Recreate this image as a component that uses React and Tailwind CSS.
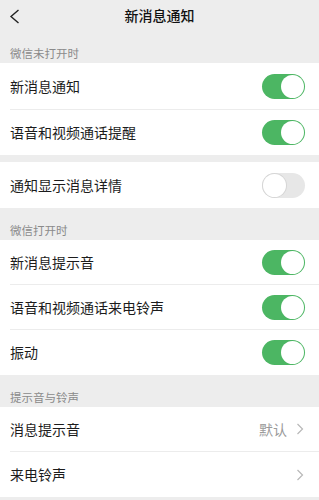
const font = { fontFamily: '"Noto Sans CJK SC", "Noto Sans", sans-serif' };

function Toggle({ on }) {
  return (
    <span
      className={`flex h-[25px] w-[43px] rounded-full p-px ${
        on ? 'justify-end bg-[#4cb663]' : 'justify-start bg-[#e7e7e7]'
      }`}
    >
      <span
        className={`h-[23px] w-[23px] rounded-full bg-white ${
          on ? '' : 'shadow-[0_0_0_1px_#d6d6d6]'
        }`}
      />
    </span>
  );
}

function Chevron() {
  return (
    <svg width="8" height="12" viewBox="0 0 8 12" fill="none">
      <polyline points="1.5,1 6.5,6 1.5,11" stroke="#b8b8b8" strokeWidth="1.2" />
    </svg>
  );
}

function Row({ label, on, value, link, last, h = 'h-[45px]' }) {
  return (
    <div className="pl-[10px]">
      <div
        className={`flex ${h} items-center justify-between pr-[14px] ${
          last ? '' : 'border-b border-[#ececec]'
        }`}
      >
        <span className="text-[14px] text-[#1c1c1c]">{label}</span>
        {link ? (
          <span className="flex items-center gap-[9px] pr-[1px]">
            {value && <span className="text-[14px] text-[#9a9a9a]">{value}</span>}
            <Chevron />
          </span>
        ) : (
          <Toggle on={on} />
        )}
      </div>
    </div>
  );
}

function Label({ children }) {
  return (
    <div className="flex h-[32px] items-end pb-[1px] pl-[10px] text-[11.5px] text-[#8a8a8a]">
      {children}
    </div>
  );
}

export default function App() {
  return (
    <div className="h-[500px] w-[319px] overflow-hidden bg-[#ededed]" style={font}>
      <div className="grid h-[31px] grid-cols-[40px_1fr_40px] items-center">
        <svg width="28" height="28" viewBox="0 0 28 28" fill="none" className="ml-[1px]">
          <polyline points="17.5,8 10,14.5 17.5,21" stroke="#222" strokeWidth="1.4" />
        </svg>
        <h1 className="text-center text-[14px] font-medium text-[#111]">新消息通知</h1>
        <span />
      </div>

      <Label>微信未打开时</Label>
      <div className="bg-white">
        <Row label="新消息通知" on h="h-[47px]" />
        <Row label="语音和视频通话提醒" on last />
      </div>

      <div className="mt-[7px] bg-white">
        <Row label="通知显示消息详情" on={false} last h="h-[46px]" />
      </div>

      <Label>微信打开时</Label>
      <div className="bg-white">
        <Row label="新消息提示音" on />
        <Row label="语音和视频通话来电铃声" on />
        <Row label="振动" on last />
      </div>

      <Label>提示音与铃声</Label>
      <div className="bg-white">
        <Row label="消息提示音" link value="默认" />
        <Row label="来电铃声" link last />
      </div>
    </div>
  );
}
